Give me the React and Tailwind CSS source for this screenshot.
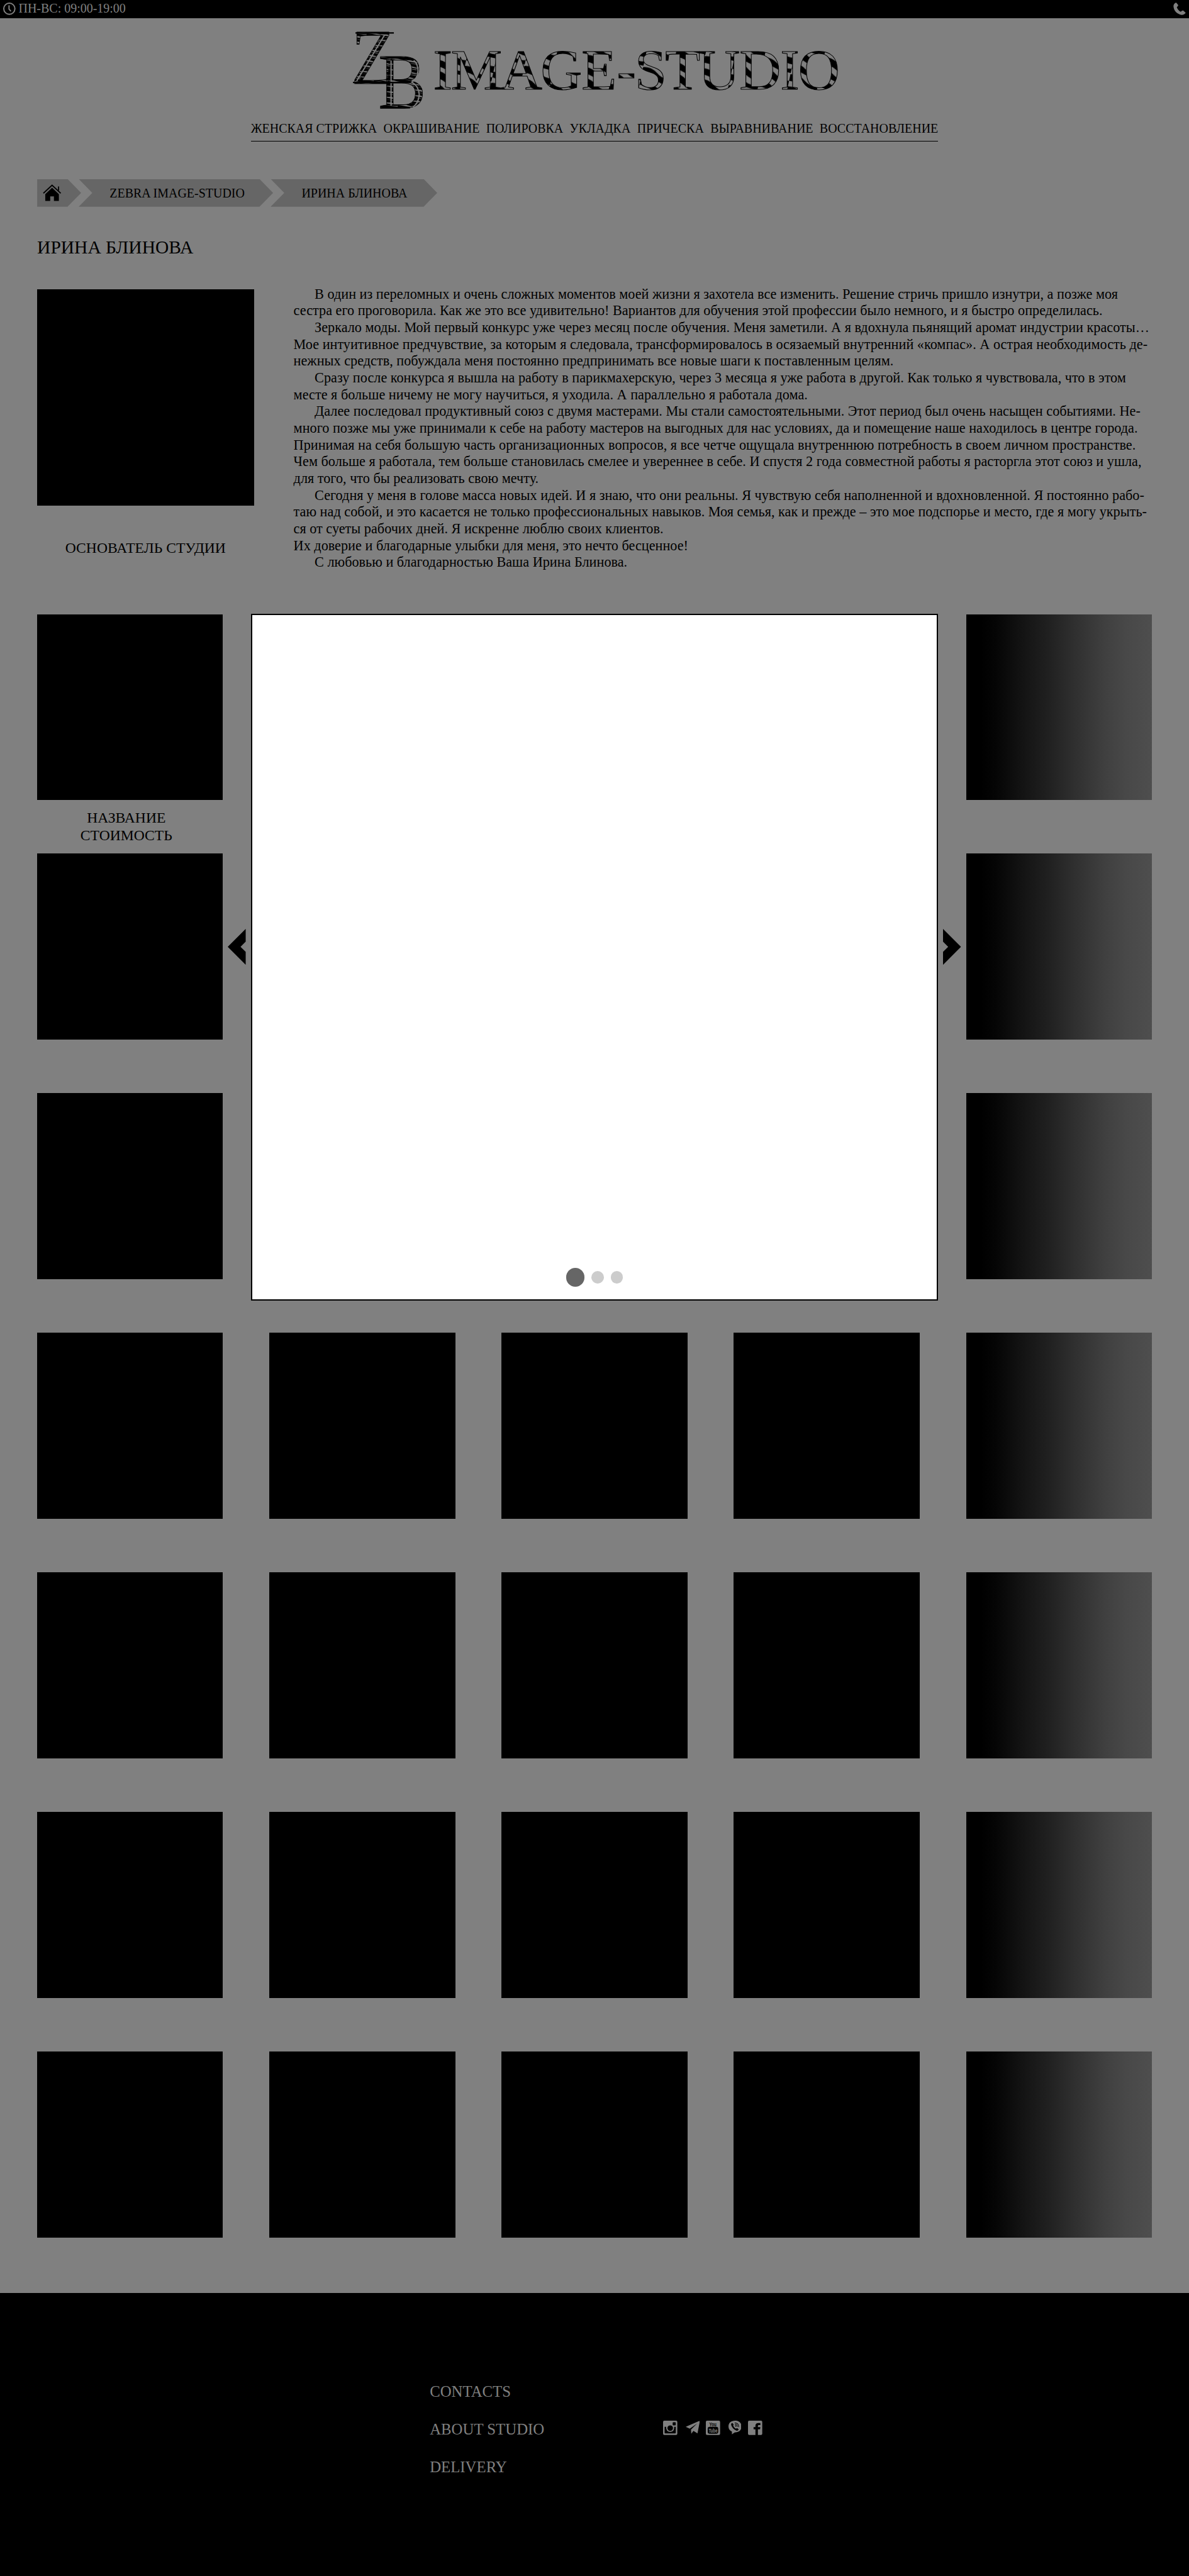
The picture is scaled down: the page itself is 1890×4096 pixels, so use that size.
const SERVICES = ['ЖЕНСКАЯ СТРИЖКА', 'ОКРАШИВАНИЕ', 'ПОЛИРОВКА', 'УКЛАДКА', 'ПРИЧЕСКА', 'ВЫРАВНИВАНИЕ', 'ВОССТАНОВЛЕНИЕ'];

const BIO = [
  [1, 'В один из переломных и очень сложных моментов моей жизни я захотела все изменить. Решение стричь пришло изнутри, а позже моя'],
  [0, 'сестра его проговорила. Как же это все удивительно! Вариантов для обучения этой профессии было немного, и я быстро определилась.'],
  [1, 'Зеркало моды. Мой первый конкурс уже через месяц после обучения. Меня заметили. А я вдохнула пьянящий аромат индустрии красоты…'],
  [0, 'Мое интуитивное предчувствие, за которым я следовала, трансформировалось в осязаемый внутренний «компас». А острая необходимость де-'],
  [0, 'нежных средств, побуждала меня постоянно предпринимать все новые шаги к поставленным целям.'],
  [1, 'Сразу после конкурса я вышла на работу в парикмахерскую, через 3 месяца я уже работа в другой. Как только я чувствовала, что в этом'],
  [0, 'месте я больше ничему не могу научиться, я уходила. А параллельно я работала дома.'],
  [1, 'Далее последовал продуктивный союз с двумя мастерами. Мы стали самостоятельными. Этот период был очень насыщен событиями. Не-'],
  [0, 'много позже мы уже принимали к себе на работу мастеров на выгодных для нас условиях, да и помещение наше находилось в центре города.'],
  [0, 'Принимая на себя большую часть организационных вопросов, я все четче ощущала внутреннюю потребность в своем личном пространстве.'],
  [0, 'Чем больше я работала, тем больше становилась смелее и увереннее в себе. И спустя 2 года совместной работы я расторгла этот союз и ушла,'],
  [0, 'для того, что бы реализовать свою мечту.'],
  [1, 'Сегодня у меня в голове масса новых идей. И я знаю, что они реальны. Я чувствую себя наполненной и вдохновленной. Я постоянно рабо-'],
  [0, 'таю над собой, и это касается не только профессиональных навыков. Моя семья, как и прежде – это мое подспорье и место, где я могу укрыть-'],
  [0, 'ся от суеты рабочих дней. Я искренне люблю своих клиентов.'],
  [0, 'Их доверие и благодарные улыбки для меня, это нечто бесценное!'],
  [1, 'С любовью и благодарностью Ваша Ирина Блинова.'],
];

const TITLE_X = '699.5 728 808.5 873 939 996 1025 1074 1127.500 1194 1260 1289';

function Logo() {
  return (
    <svg className="mt-4 block h-[140px] w-full overflow-visible" viewBox="0 45 1920 140" fontFamily="'Liberation Serif', serif">
      <defs>
        <pattern id="zebra" width="47" height="38" patternUnits="userSpaceOnUse" patternTransform="translate(4 3) rotate(12)">
          <path d="M0 2Q14 -1 24 7T47 13V24Q34 24 24 18T0 13ZM0 22Q12 20 22 27T47 31V38H38Q28 38 20 35T0 31Z" />
        </pattern>
        <pattern id="fine" width="22" height="9" patternUnits="userSpaceOnUse" patternTransform="rotate(8)">
          <path d="M0 0L22 1V6L10 4.500L0 5.500ZM0 6.500L22 7.500V9H0Z" />
        </pattern>
      </defs>
      <g fill="url(#fine)" stroke="#000" strokeWidth="0.8" fontSize="126">
        <text x="567" y="135" textLength="71" lengthAdjust="spacingAndGlyphs">Z</text>
        <text x="611" y="175.500" textLength="77" lengthAdjust="spacingAndGlyphs">B</text>
      </g>
      <path d="M621 57L576 131M631.500 98V171M668 98Q675 103 675 115Q674 128 665 133Q676 139 677 153Q676 167 667 173" fill="none" stroke="#808080" strokeWidth="2" />
      <path d="M574 53.500H636M570 133.500H640M614 94H660M614 174.500H662M640 133.500H662" stroke="#000" strokeWidth="2.200" />
      <text x={TITLE_X} y="144.500" fontSize="93" fill="url(#zebra)" stroke="#000" strokeWidth="1.100">IMAGE-STUDIO</text>
    </svg>
  );
}

function Arrow({ flip }) {
  return (
    <svg viewBox="0 0 29 58" className={flip ? 'mb-[34px] h-[58px] w-[29px] -scale-x-100' : 'mb-[34px] h-[58px] w-[29px]'}>
      <path d="M29 0V20.500L20.700 29L29 37V58L0 29Z" />
    </svg>
  );
}

function Card({ faded, caption }) {
  return (
    <div className="h-[300px]">
      <div
        className={
          faded
            ? 'h-[300px] bg-[linear-gradient(90deg,#000_8%,#050505_16%,#141414_31%,#202020_44%,#2d2d2d_56%,#404040_75%,#484848_86%,#4e4e4e_100%)]'
            : 'h-[300px] bg-black'
        }
      />
      {caption && (
        <div className="mt-[14px] mr-3 text-center text-[24px] leading-[29px]">
          НАЗВАНИЕ
          <br />
          СТОИМОСТЬ
        </div>
      )}
    </div>
  );
}

function Socials() {
  return (
    <div className="flex h-6 items-start fill-[#808080]">
      <svg className="h-[23px] w-[23px]" viewBox="0 0 23 23">
        <path fillRule="evenodd" d="M2 0H21Q23 0 23 2V21Q23 23 21 23H2Q0 23 0 21V2Q0 0 2 0ZM16.500 2.500Q15.500 2.500 15.500 3.500V6.500Q15.500 7.500 16.500 7.500H19.500Q20.500 7.500 20.500 6.500V3.500Q20.500 2.500 19.500 2.500ZM2.500 10V19.500Q2.500 20.500 3.500 20.500H19.500Q20.500 20.500 20.500 19.500V10H18Q18.500 18 11.500 18.200Q4.500 18 5 10ZM11.500 7.500A4.500 4.500 0 1 0 11.510 7.500Z" />
      </svg>
      <svg className="ml-[13px] h-[22px] w-[23px]" viewBox="0 0 23 22">
        <path d="M23 0L0 10L6.500 13L18.500 4.500L8.500 14.500L9 21L12.500 16.500L19 20.500Z" />
      </svg>
      <svg className="ml-[10px] h-[23px] w-[23px]" viewBox="0 0 23 23" fontFamily="'Liberation Sans', sans-serif" fontWeight="bold">
        <rect width="23" height="23" rx="2" />
        <text x="5.700" y="9" fontSize="9.500" textLength="11.500" lengthAdjust="spacingAndGlyphs" className="fill-black">You</text>
        <rect x="3" y="10" width="17" height="11" rx="3" className="fill-black" />
        <text x="4.500" y="19" fontSize="10" textLength="14" lengthAdjust="spacingAndGlyphs">Tube</text>
      </svg>
      <svg className="ml-[13px] h-[22px] w-[21px]" viewBox="0 0 21 22">
        <path d="M10.500 0C17 0 21 3.500 21 9.500S16.500 19 10 19L5.500 22V17.500Q0 15.500 0 9.500C0 3.500 4 0 10.500 0Z" />
        <path className="fill-black" d="M6 3.500L8.300 6L7.500 8.200Q9 11.500 12 13L14 12L16.500 14.200Q15 17 12.500 16Q6 13 4.200 6.500Q4 4.500 6 3.500Z" />
        <path className="stroke-black" fill="none" strokeWidth="1.100" d="M10 3.500Q16.500 3.500 16.500 10.500M10.300 5.800Q14 6 14.200 10M10.500 8Q12 8 12 9.800" />
      </svg>
      <svg className="ml-[11px] h-[23px] w-[23px]" viewBox="0 0 23 23">
        <path d="M2 0H21Q23 0 23 2V21Q23 23 21 23H16V14H19.500L20 10.500H16V8.500Q16 7 17.700 7H20V3.700H17Q12 3.700 12 8V10.500H9V14H12V23H2Q0 23 0 21V2Q0 0 2 0Z" />
      </svg>
    </div>
  );
}

export default function App() {
  return (
    <div className="h-[4161px] w-[1920px] overflow-hidden bg-[#808080] font-['Liberation_Serif',serif] text-black [zoom:0.984375]">
      <div className="flex h-[29px] justify-between bg-black pr-[5px] pl-[5px] text-[#808080]">
        <div className="flex">
          <svg className="mt-1 h-5 w-5" viewBox="0 0 20 20" fill="none" stroke="#808080" strokeWidth="2">
            <circle cx="10" cy="10" r="9" />
            <path d="M9.500 4.500V10.500L12.500 14" />
          </svg>
          <span className="ml-[5px] text-[20.3px] leading-[27px]">ПН-ВС: 09:00-19:00</span>
        </div>
        <svg className="mt-1 h-5 w-5" viewBox="0 0 20 20" fill="#808080">
          <path d="M4.500 0L8 4Q8.300 5.500 5.700 7.500Q7.500 12.500 12 15Q14.500 12.500 16 13L20 16.500Q18 20 13.500 20Q1 17 0.300 5.500Q1 1.500 4.500 0Z" />
        </svg>
      </div>

      <Logo />

      <nav className="mx-auto mt-[13px] flex w-[1110px] justify-between border-b-[1.1px] border-black pb-[10px] text-[20.3px] leading-5 whitespace-nowrap">
        {SERVICES.map((s) => (
          <a key={s}>{s}</a>
        ))}
      </nav>

      <div className="mt-[60px] ml-[60px] flex h-[45px] text-[20.3px] leading-[45px] whitespace-nowrap">
        <div className="w-[71px] bg-[#666] pt-[9px] pl-[9px] [clip-path:polygon(0_0,49px_0,71px_50%,49px_100%,0_100%)]">
          <svg className="h-[27px] w-[30px]" viewBox="0 0 30 27">
            <path d="M15 5.500L26 16V27H18V19.500H12V27H4V16Z" />
            <path d="M1 14.500L15 1.500L29 14.500M25.500 3.500V10" fill="none" stroke="#000" strokeWidth="1.800" />
          </svg>
        </div>
        <div className="-ml-1 w-[314px] bg-[#666] pl-[50px] [clip-path:polygon(0_0,292px_0,314px_50%,292px_100%,0_100%,22px_50%)]">ZEBRA IMAGE-STUDIO</div>
        <div className="-ml-1 w-[269px] bg-[#666] pl-[50px] [clip-path:polygon(0_0,247px_0,269px_50%,247px_100%,0_100%,22px_50%)]">ИРИНА БЛИНОВА</div>
      </div>

      <h1 className="mt-[51px] ml-[60px] text-[30px] leading-[30px]">ИРИНА БЛИНОВА</h1>

      <section className="mt-[46px] ml-[60px] flex h-[531px]">
        <div className="w-[350px] pt-[6px]">
          <div className="h-[350px] bg-black" />
          <p className="mt-[57px] text-center text-[24px] leading-6">ОСНОВАТЕЛЬ СТУДИИ</p>
        </div>
        <div className="ml-16 pt-px text-[22.6px] leading-[27.08px] whitespace-nowrap">
          {BIO.map(([indent, line]) => (
            <p key={line} className={indent ? 'pl-[34px]' : ''}>{line}</p>
          ))}
        </div>
      </section>

      <section className="relative mx-[60px]">
        <div className="grid grid-cols-5 gap-x-[75px] gap-y-[87px]">
          {Array.from({ length: 35 }, (_, i) => (
            <Card key={i} faded={i % 5 === 4} caption={i === 0} />
          ))}
        </div>
        <div className="absolute top-[-1px] left-[308px] flex items-center gap-2">
          <Arrow />
          <div className="flex h-[1110px] w-[1110px] items-end justify-center border-[2.1px] border-black bg-white pb-[21px]">
            <div className="flex items-center gap-[11px]">
              <span className="h-[30px] w-[30px] rounded-full bg-[#666]" />
              <span className="h-5 w-5 rounded-full bg-[#ccc]" />
              <span className="h-5 w-5 rounded-full bg-[#ccc]" />
            </div>
          </div>
          <Arrow flip />
        </div>
      </section>

      <footer className="mt-[90px] flex h-[457px] bg-black pl-[694px] text-[#808080]">
        <div className="w-[377px] pt-[129px] text-[25.2px] leading-[61px]">
          <p>CONTACTS</p>
          <p>ABOUT STUDIO</p>
          <p>DELIVERY</p>
        </div>
        <div className="pt-[206px]">
          <Socials />
        </div>
      </footer>
    </div>
  );
}
